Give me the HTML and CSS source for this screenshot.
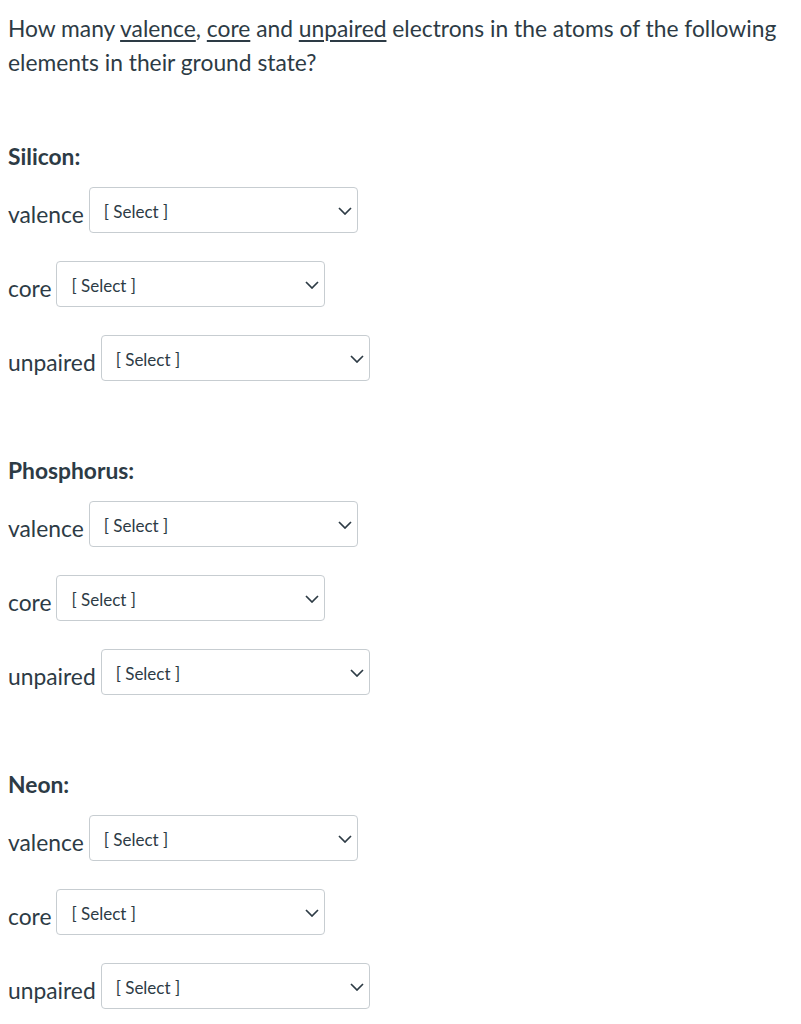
FILE: index.html
```html
<!DOCTYPE html>
<html>
<head>
<meta charset="utf-8">
<link rel="stylesheet" href="styles.css">
</head>
<body>
<div class="question">
  <p class="prompt">How many <u>valence</u>, <u>core</u> and <u>unpaired</u> electrons in the atoms of the following elements in their ground state?</p>

  <section class="element">
    <h3 class="name">Silicon:</h3>
    <div class="rows">
      <div class="row"><span class="label">valence</span><div class="select"><span class="value">[ Select ]</span><svg class="chev" width="14" height="8" viewBox="0 0 14 8"><path d="M1 1 L7 7 L13 1" fill="none" stroke="#2d3b45" stroke-width="1.7"/></svg></div></div>
      <div class="row"><span class="label">core</span><div class="select"><span class="value">[ Select ]</span><svg class="chev" width="14" height="8" viewBox="0 0 14 8"><path d="M1 1 L7 7 L13 1" fill="none" stroke="#2d3b45" stroke-width="1.7"/></svg></div></div>
      <div class="row"><span class="label">unpaired</span><div class="select"><span class="value">[ Select ]</span><svg class="chev" width="14" height="8" viewBox="0 0 14 8"><path d="M1 1 L7 7 L13 1" fill="none" stroke="#2d3b45" stroke-width="1.7"/></svg></div></div>
    </div>
  </section>

  <section class="element">
    <h3 class="name">Phosphorus:</h3>
    <div class="rows">
      <div class="row"><span class="label">valence</span><div class="select"><span class="value">[ Select ]</span><svg class="chev" width="14" height="8" viewBox="0 0 14 8"><path d="M1 1 L7 7 L13 1" fill="none" stroke="#2d3b45" stroke-width="1.7"/></svg></div></div>
      <div class="row"><span class="label">core</span><div class="select"><span class="value">[ Select ]</span><svg class="chev" width="14" height="8" viewBox="0 0 14 8"><path d="M1 1 L7 7 L13 1" fill="none" stroke="#2d3b45" stroke-width="1.7"/></svg></div></div>
      <div class="row"><span class="label">unpaired</span><div class="select"><span class="value">[ Select ]</span><svg class="chev" width="14" height="8" viewBox="0 0 14 8"><path d="M1 1 L7 7 L13 1" fill="none" stroke="#2d3b45" stroke-width="1.7"/></svg></div></div>
    </div>
  </section>

  <section class="element">
    <h3 class="name">Neon:</h3>
    <div class="rows">
      <div class="row"><span class="label">valence</span><div class="select"><span class="value">[ Select ]</span><svg class="chev" width="14" height="8" viewBox="0 0 14 8"><path d="M1 1 L7 7 L13 1" fill="none" stroke="#2d3b45" stroke-width="1.7"/></svg></div></div>
      <div class="row"><span class="label">core</span><div class="select"><span class="value">[ Select ]</span><svg class="chev" width="14" height="8" viewBox="0 0 14 8"><path d="M1 1 L7 7 L13 1" fill="none" stroke="#2d3b45" stroke-width="1.7"/></svg></div></div>
      <div class="row"><span class="label">unpaired</span><div class="select"><span class="value">[ Select ]</span><svg class="chev" width="14" height="8" viewBox="0 0 14 8"><path d="M1 1 L7 7 L13 1" fill="none" stroke="#2d3b45" stroke-width="1.7"/></svg></div></div>
    </div>
  </section>
</div>
</body>
</html>
```

FILE: styles.css
```css
html, body {
  margin: 0;
  padding: 0;
  background: #ffffff;
}
body {
  font-family: Lato, "Liberation Sans", sans-serif;
  color: #2d3b45;
  font-size: 22.8px;
  line-height: 34px;
}
.question {
  padding: 11px 8px 0 8px;
}
.prompt {
  margin: 0;
}
.prompt u {
  text-decoration-thickness: 1.5px;
  text-underline-offset: 3px;
}
.element {
  margin-top: 60px;
}
.element + .element {
  margin-top: 72px;
}
.name {
  margin: 0;
  font-size: 22.8px;
  font-weight: 700;
  line-height: 34px;
}
.rows {
  margin-top: 14px;
  display: flex;
  flex-direction: column;
  gap: 28px;
}
.row {
  display: flex;
  align-items: center;
  gap: 5px;
}
.label {
  line-height: 34px;
  margin-top: 7px;
}
.select {
  box-sizing: border-box;
  width: 269px;
  height: 46px;
  border: 1px solid #c7cdd1;
  border-radius: 4px;
  background: #fff;
  display: flex;
  align-items: baseline;
  justify-content: space-between;
  padding: 14px 5px 0 14px;
}
.value {
  font-size: 17px;
  line-height: 20px;
}
.chev {
  align-self: center;
  margin-top: -12px;
}
```
